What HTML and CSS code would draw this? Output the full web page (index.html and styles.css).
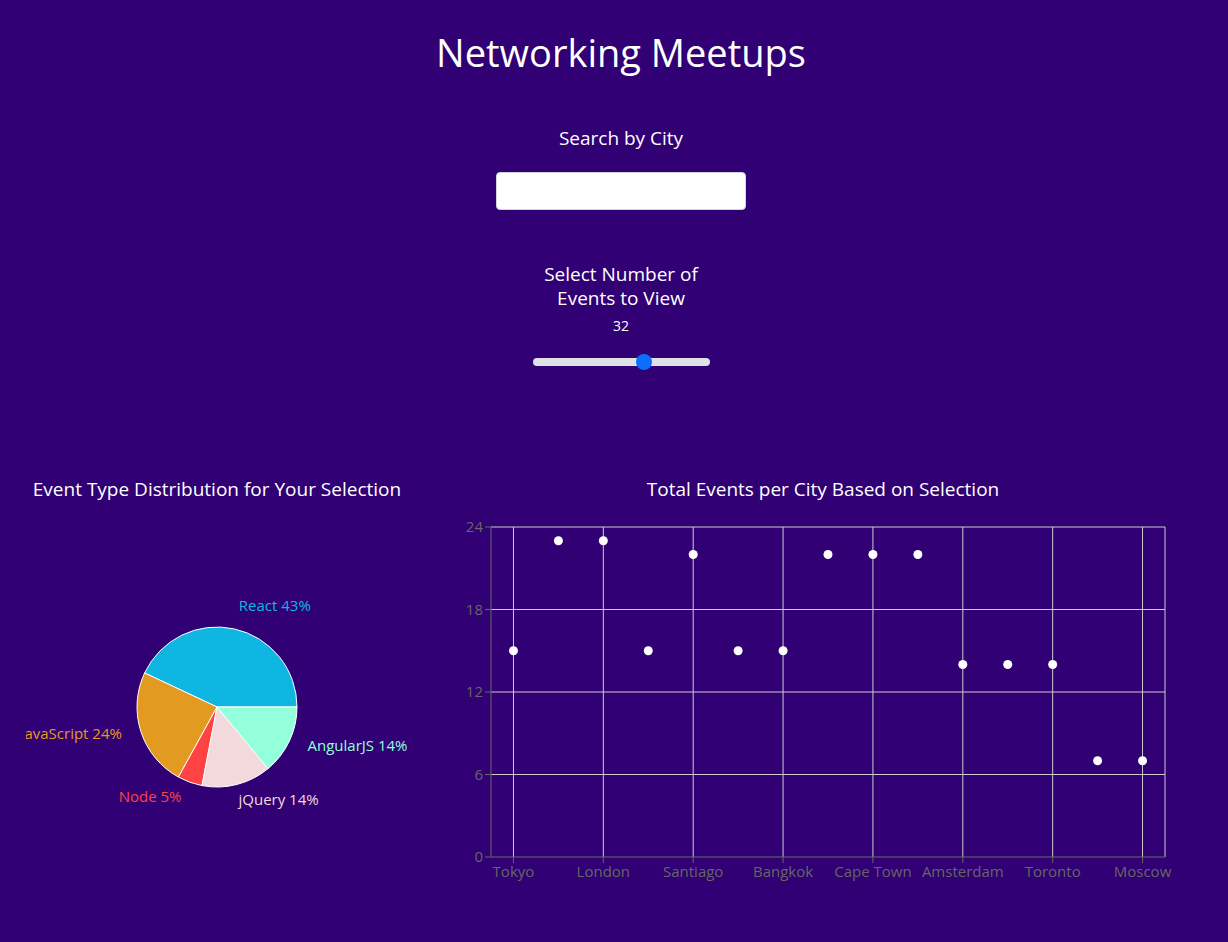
FILE: index.html
```html
<!DOCTYPE html>
<html lang="en">
<head>
<meta charset="utf-8">
<title>Networking Meetups</title>
<link rel="stylesheet" href="styles.css">
</head>
<body>
<main class="page">
  <section class="top">
    <h1 class="title">Networking Meetups</h1>
    <div class="control search">
      <h5 class="label">Search by City</h5>
      <input class="city-input" type="text" aria-label="Search by City">
    </div>
    <div class="control events">
      <h5 class="label narrow">Select Number of Events to View</h5>
      <div class="value">32</div>
      <input class="range" type="range" min="0" max="50" value="32" aria-label="Number of events">
    </div>
  </section>

  <section class="charts">
    <div class="chart chart-pie">
      <h5 class="chart-title">Event Type Distribution for Your Selection</h5>
      <svg class="pie-svg" width="382" height="400" viewBox="0 0 382 400">
        <g stroke="#fff" stroke-width="1">
          <path fill="#10b6e2" d="M191,200 L271,200 A80,80 0 0,0 118.62,165.94 Z"/>
          <path fill="#e39a20" d="M191,200 L118.62,165.94 A80,80 0 0,0 152.46,270.10 Z"/>
          <path fill="#ff4242" d="M191,200 L152.46,270.10 A80,80 0 0,0 176.01,278.58 Z"/>
          <path fill="#f4d9dc" d="M191,200 L176.01,278.58 A80,80 0 0,0 241.99,261.64 Z"/>
          <path fill="#94ffdb" d="M191,200 L241.99,261.64 A80,80 0 0,0 271,200 Z"/>
        </g>
        <g class="pie-labels">
          <text x="212.8" y="104" text-anchor="start" fill="#10b6e2">React 43%</text>
          <text x="95.9" y="231.5" text-anchor="end" fill="#e39a20">JavaScript 24%</text>
          <text x="155.5" y="294.5" text-anchor="end" fill="#ff4242">Node 5%</text>
          <text x="212.5" y="298" text-anchor="start" fill="#f4d9dc">jQuery 14%</text>
          <text x="281.5" y="244" text-anchor="start" fill="#94ffdb">AngularJS 14%</text>
        </g>
      </svg>
    </div>

    <div class="chart chart-scatter">
      <h5 class="chart-title">Total Events per City Based on Selection</h5>
      <svg class="scatter-svg" width="778" height="400" viewBox="0 0 778 400">
        <g class="grid" stroke="#ccc" stroke-width="1" fill="none">
          <line x1="57" y1="20" x2="731" y2="20"/>
          <line x1="57" y1="102.5" x2="731" y2="102.5"/>
          <line x1="57" y1="185" x2="731" y2="185"/>
          <line x1="57" y1="267.5" x2="731" y2="267.5"/>
          <line x1="79.47" y1="20" x2="79.47" y2="350"/>
          <line x1="169.33" y1="20" x2="169.33" y2="350"/>
          <line x1="259.2" y1="20" x2="259.2" y2="350"/>
          <line x1="349.07" y1="20" x2="349.07" y2="350"/>
          <line x1="438.93" y1="20" x2="438.93" y2="350"/>
          <line x1="528.8" y1="20" x2="528.8" y2="350"/>
          <line x1="618.67" y1="20" x2="618.67" y2="350"/>
          <line x1="708.53" y1="20" x2="708.53" y2="350"/>
          <line x1="731" y1="20" x2="731" y2="350"/>
        </g>
        <g class="axis" stroke="#666" stroke-width="1" fill="none">
          <line x1="57" y1="20" x2="57" y2="350"/>
          <line x1="57" y1="350" x2="731" y2="350"/>
          <line x1="51" y1="20" x2="57" y2="20"/>
          <line x1="51" y1="102.5" x2="57" y2="102.5"/>
          <line x1="51" y1="185" x2="57" y2="185"/>
          <line x1="51" y1="267.5" x2="57" y2="267.5"/>
          <line x1="51" y1="350" x2="57" y2="350"/>
          <line x1="79.47" y1="350" x2="79.47" y2="356"/>
          <line x1="169.33" y1="350" x2="169.33" y2="356"/>
          <line x1="259.2" y1="350" x2="259.2" y2="356"/>
          <line x1="349.07" y1="350" x2="349.07" y2="356"/>
          <line x1="438.93" y1="350" x2="438.93" y2="356"/>
          <line x1="528.8" y1="350" x2="528.8" y2="356"/>
          <line x1="618.67" y1="350" x2="618.67" y2="356"/>
          <line x1="708.53" y1="350" x2="708.53" y2="356"/>
        </g>
        <g class="tick-text" fill="#666">
          <text x="49" y="20" dy="0.355em" text-anchor="end">24</text>
          <text x="49" y="102.5" dy="0.355em" text-anchor="end">18</text>
          <text x="49" y="185" dy="0.355em" text-anchor="end">12</text>
          <text x="49" y="267.5" dy="0.355em" text-anchor="end">6</text>
          <text x="49" y="350" dy="0.355em" text-anchor="end">0</text>
          <text x="79.47" y="359" dy="0.71em" text-anchor="middle">Tokyo</text>
          <text x="169.33" y="359" dy="0.71em" text-anchor="middle">London</text>
          <text x="259.2" y="359" dy="0.71em" text-anchor="middle">Santiago</text>
          <text x="349.07" y="359" dy="0.71em" text-anchor="middle">Bangkok</text>
          <text x="438.93" y="359" dy="0.71em" text-anchor="middle">Cape Town</text>
          <text x="528.8" y="359" dy="0.71em" text-anchor="middle">Amsterdam</text>
          <text x="618.67" y="359" dy="0.71em" text-anchor="middle">Toronto</text>
          <text x="708.53" y="359" dy="0.71em" text-anchor="middle">Moscow</text>
        </g>
        <g class="dots" fill="#fff">
          <circle cx="79.47" cy="143.75" r="4.5"/>
          <circle cx="124.4" cy="33.75" r="4.5"/>
          <circle cx="169.33" cy="33.75" r="4.5"/>
          <circle cx="214.27" cy="143.75" r="4.5"/>
          <circle cx="259.2" cy="47.5" r="4.5"/>
          <circle cx="304.13" cy="143.75" r="4.5"/>
          <circle cx="349.07" cy="143.75" r="4.5"/>
          <circle cx="394" cy="47.5" r="4.5"/>
          <circle cx="438.93" cy="47.5" r="4.5"/>
          <circle cx="483.87" cy="47.5" r="4.5"/>
          <circle cx="528.8" cy="157.5" r="4.5"/>
          <circle cx="573.73" cy="157.5" r="4.5"/>
          <circle cx="618.67" cy="157.5" r="4.5"/>
          <circle cx="663.6" cy="253.75" r="4.5"/>
          <circle cx="708.53" cy="253.75" r="4.5"/>
        </g>
      </svg>
    </div>
  </section>
</main>
</body>
</html>
```

FILE: styles.css
```css
html {
  background: #300074;
}

body {
  margin: 0;
  background: #300074;
  color: #ffffff;
  font-family: "Open Sans", "Noto Sans", sans-serif;
  min-height: 942px;
}

.page {
  display: flex;
  flex-direction: column;
}

.top {
  display: flex;
  flex-direction: column;
  align-items: center;
  padding: 28px 0 0 14px;
}

.title {
  margin: 0;
  font-size: 38px;
  line-height: 48px;
  font-weight: 400;
}

.control {
  display: flex;
  flex-direction: column;
  align-items: center;
}

.search {
  margin-top: 50px;
}

.label {
  margin: 0;
  font-size: 19px;
  line-height: 24px;
  font-weight: 400;
  text-align: center;
}

.narrow {
  width: 170px;
}

.city-input {
  margin-top: 22px;
  width: 250px;
  height: 38px;
  box-sizing: border-box;
  border: 1px solid #ced4da;
  border-radius: 4px;
  background: #ffffff;
  padding: 6px 12px;
  font-size: 16px;
}

.events {
  margin-top: 52px;
}

.value {
  margin-top: 4px;
  font-size: 14px;
  line-height: 24px;
}

.range {
  -webkit-appearance: none;
  appearance: none;
  margin: 12px 0 0;
  width: 177px;
  height: 24px;
  padding: 0;
  background: transparent;
}

.range::-webkit-slider-runnable-track {
  height: 8px;
  border-radius: 8px;
  background: #dee2e6;
}

.range::-webkit-slider-thumb {
  -webkit-appearance: none;
  appearance: none;
  width: 16px;
  height: 16px;
  margin-top: -4px;
  border-radius: 50%;
  border: 0;
  background: #0d6efd;
}

.charts {
  display: grid;
  grid-template-columns: 434px 778px;
  margin-top: 103px;
}

.chart {
  display: flex;
  flex-direction: column;
  align-items: center;
}

.chart-title {
  margin: 0;
  font-size: 19px;
  line-height: 24px;
  font-weight: 400;
}

.pie-svg,
.scatter-svg {
  display: block;
  margin-top: 6px;
  overflow: hidden;
}

.pie-labels text,
.tick-text text {
  font-family: "Open Sans", "Noto Sans", sans-serif;
  font-size: 15px;
}
```
